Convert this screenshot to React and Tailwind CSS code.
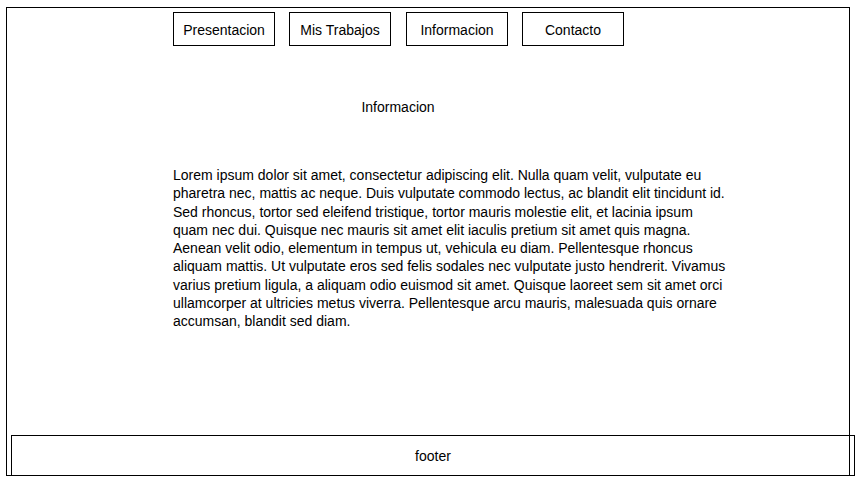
import React from 'react';

const links = [
    { label: 'Presentacion', ml: 'ml-0' },
    { label: 'Mis Trabajos', ml: 'ml-[14px]' },
    { label: 'Informacion', ml: 'ml-[15px]' },
    { label: 'Contacto', ml: 'ml-[14px]' },
];

const texto =
    'Lorem ipsum dolor sit amet, consectetur adipiscing elit. Nulla quam velit, vulputate eu pharetra nec, mattis ac neque. Duis vulputate commodo lectus, ac blandit elit tincidunt id. Sed rhoncus, tortor sed eleifend tristique, tortor mauris molestie elit, et lacinia ipsum quam nec dui. Quisque nec mauris sit amet elit iaculis pretium sit amet quis magna. Aenean velit odio, elementum in tempus ut, vehicula eu diam. Pellentesque rhoncus aliquam mattis. Ut vulputate eros sed felis sodales nec vulputate justo hendrerit. Vivamus varius pretium ligula, a aliquam odio euismod sit amet. Quisque laoreet sem sit amet orci ullamcorper at ultricies metus viverra. Pellentesque arcu mauris, malesuada quis ornare accumsan, blandit sed diam.';

const App = () => {
    return (
        <div className="bg-white min-h-[483px] pt-[7px] pl-[6px] text-black font-['Liberation_Sans',Arial,sans-serif]">
            <div className="w-[844px] h-[469px] border border-black flex flex-col">
                {/* menu */}
                <nav className="flex mt-[4px] ml-[166px]">
                    {links.map((l) => (
                        <a
                            key={l.label}
                            href="#"
                            className={`${l.ml} w-[102px] h-[34px] pt-[2px] border border-black flex items-center justify-center text-[14px]`}
                        >
                            {l.label}
                        </a>
                    ))}
                </nav>

                <h2 className="ml-[166px] w-[450px] mt-[53px] text-center text-[14px] leading-[16px]">Informacion</h2>

                <p className="ml-[166px] w-[556px] mt-[51px] text-[14px] leading-[18.25px]">{texto}</p>

                <footer className="mt-auto -mb-px ml-[4px] w-[844px] h-[41px] pt-[2px] border border-black flex items-center justify-center text-[14px]">
                    footer
                </footer>
            </div>
        </div>
    );
};

export default App;
